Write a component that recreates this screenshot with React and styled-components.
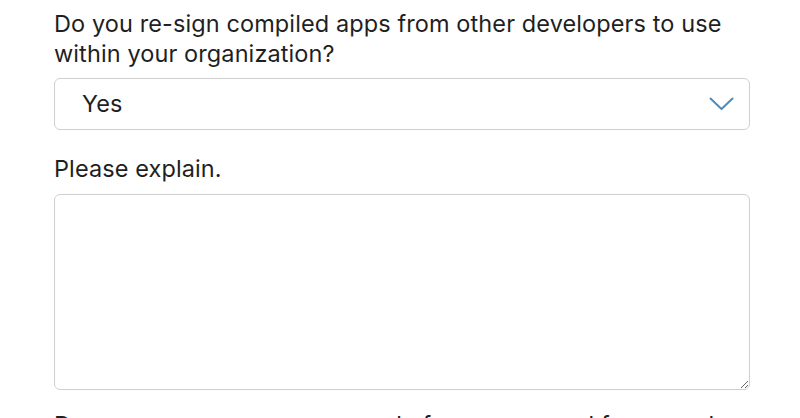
import React from 'react';
import styled, { createGlobalStyle } from 'styled-components';

const GlobalStyle = createGlobalStyle`
  html, body {
    margin: 0;
    padding: 0;
    background: #fff;
    overflow: hidden;
  }
  body {
    font-family: Inter, "Noto Sans", sans-serif;
    color: #1f1f1f;
  }
`;

const Page = styled.div`
  padding: 9px 50px 0 54px;
  height: 418px;
  box-sizing: border-box;
  overflow: hidden;
`;

const Field = styled.div`
  margin-bottom: ${({ gap }) => gap || '20px'};
`;

const Label = styled.label`
  display: block;
  font-size: 23.5px;
  line-height: 30px;
  letter-spacing: 0.1px;
  margin-bottom: ${({ mb }) => mb || '10px'};
`;

const SelectWrap = styled.div`
  position: relative;
`;

const Select = styled.select`
  appearance: none;
  width: 100%;
  height: 52px;
  box-sizing: border-box;
  border: 1px solid #cfcfcf;
  border-radius: 6px;
  background: #fff;
  padding: 0 0 2px 27px;
  font-family: inherit;
  font-size: 23.5px;
  letter-spacing: 0.1px;
  color: #1f1f1f;
  outline: none;
`;

const Chevron = styled.svg`
  position: absolute;
  right: 16px;
  top: 19px;
  pointer-events: none;
`;

const TextArea = styled.textarea`
  display: block;
  width: 100%;
  height: 196px;
  box-sizing: border-box;
  border: 1px solid #cfcfcf;
  border-radius: 6px;
  resize: vertical;
  font-family: inherit;
  font-size: 20px;
  outline: none;
`;

export default function App() {
  return (
    <Page>
      <GlobalStyle />
      <Field gap="24px">
        <Label mb="9px">
          Do you re-sign compiled apps from other developers to use within your organization?
        </Label>
        <SelectWrap>
          <Select defaultValue="yes">
            <option value="yes">Yes</option>
            <option value="no">No</option>
          </Select>
          <Chevron width="25" height="14" viewBox="0 0 25 14" fill="none">
            <path d="M1.5 1.5 L12.5 12 L23.5 1.5" stroke="#4f8bbd" strokeWidth="2" strokeLinecap="round" strokeLinejoin="round" />
          </Chevron>
        </SelectWrap>
      </Field>
      <Field>
        <Label>Please explain.</Label>
        <TextArea />
      </Field>
      <Field>
        <Label>Do you sweep your source code for unapproved frameworks or libraries?</Label>
      </Field>
    </Page>
  );
}
